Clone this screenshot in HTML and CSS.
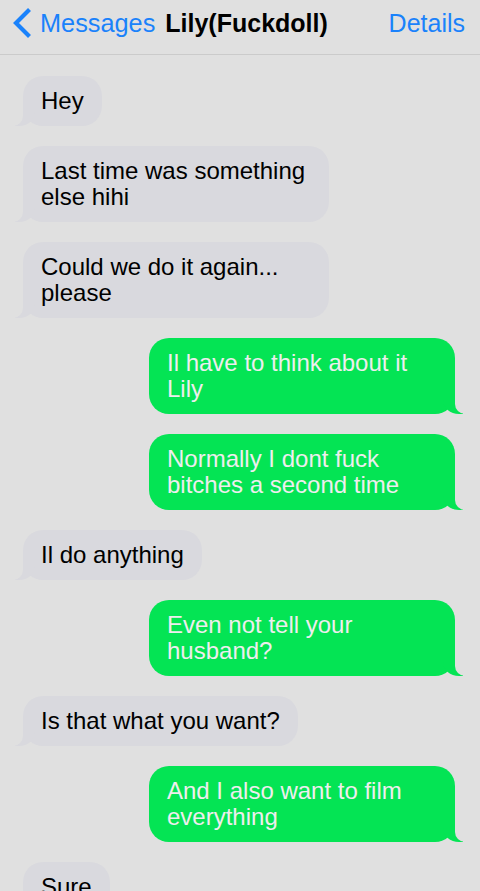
FILE: index.html
```html
<!DOCTYPE html>
<html>
<head>
<meta charset="utf-8">
<link rel="stylesheet" href="styles.css">
</head>
<body>
<header class="navbar">
  <div class="nav-left">
    <svg class="chevron" width="20" height="30" viewBox="0 0 20 30"><polyline points="17.5,1.5 4,15 17.5,28.5" fill="none" stroke="#1a82fb" stroke-width="4.2" stroke-linecap="butt" stroke-linejoin="miter"/></svg>
    <span class="back">Messages</span>
    <span class="title">Lily(Fuckdoll)</span>
  </div>
  <span class="details">Details</span>
</header>
<main class="thread">
  <div class="msg them">Hey</div>
  <div class="msg them">Last time was something else hihi</div>
  <div class="msg them">Could we do it again... please</div>
  <div class="msg me">Il have to think about it Lily</div>
  <div class="msg me">Normally I dont fuck bitches a second time</div>
  <div class="msg them">Il do anything</div>
  <div class="msg me">Even not tell your husband?</div>
  <div class="msg them">Is that what you want?</div>
  <div class="msg me">And I also want to film everything</div>
  <div class="msg them">Sure</div>
</main>
</body>
</html>
```
FILE: styles.css
```css
html, body {
  margin: 0;
  padding: 0;
  background: #e0e0e0;
  font-family: "Liberation Sans", Arial, sans-serif;
  overflow: hidden;
  height: 891px;
}
.navbar {
  height: 54px;
  border-bottom: 1px solid #cbcbcb;
  display: flex;
  align-items: flex-start;
  justify-content: space-between;
  padding: 0 15px 0 12px;
  box-sizing: content-box;
}
.nav-left {
  display: flex;
  align-items: center;
  height: 46px;
}
.chevron {
  margin-right: 8px;
}
.back {
  color: #1a82fb;
  font-size: 25.3px;
}
.title {
  color: #000;
  font-weight: bold;
  font-size: 25px;
  margin-left: 10px;
}
.details {
  color: #1a82fb;
  font-size: 25px;
  line-height: 46px;
}
.thread {
  display: flex;
  flex-direction: column;
  gap: 20px;
  padding: 21px 25px 0 23px;
}
.msg {
  position: relative;
  max-width: 306px;
  box-sizing: border-box;
  padding: 12px 18px;
  font-size: 24px;
  line-height: 26px;
  border-radius: 20px;
}
.them {
  align-self: flex-start;
  background: #d9d9de;
  color: #000;
}
.me {
  align-self: flex-end;
  background: #04e454;
  color: #eeeeee;
  width: 306px;
}
.msg::before, .msg::after {
  content: "";
  position: absolute;
  bottom: 0;
  height: 22px;
}
.me::before {
  right: -8px;
  width: 20px;
  background: #04e454;
  border-bottom-left-radius: 16px 14px;
}
.me::after {
  right: -26px;
  width: 26px;
  background: #e0e0e0;
  border-bottom-left-radius: 10px;
}
.them::before {
  left: -8px;
  width: 20px;
  background: #d9d9de;
  border-bottom-right-radius: 16px 14px;
}
.them::after {
  left: -26px;
  width: 26px;
  background: #e0e0e0;
  border-bottom-right-radius: 10px;
}
```
